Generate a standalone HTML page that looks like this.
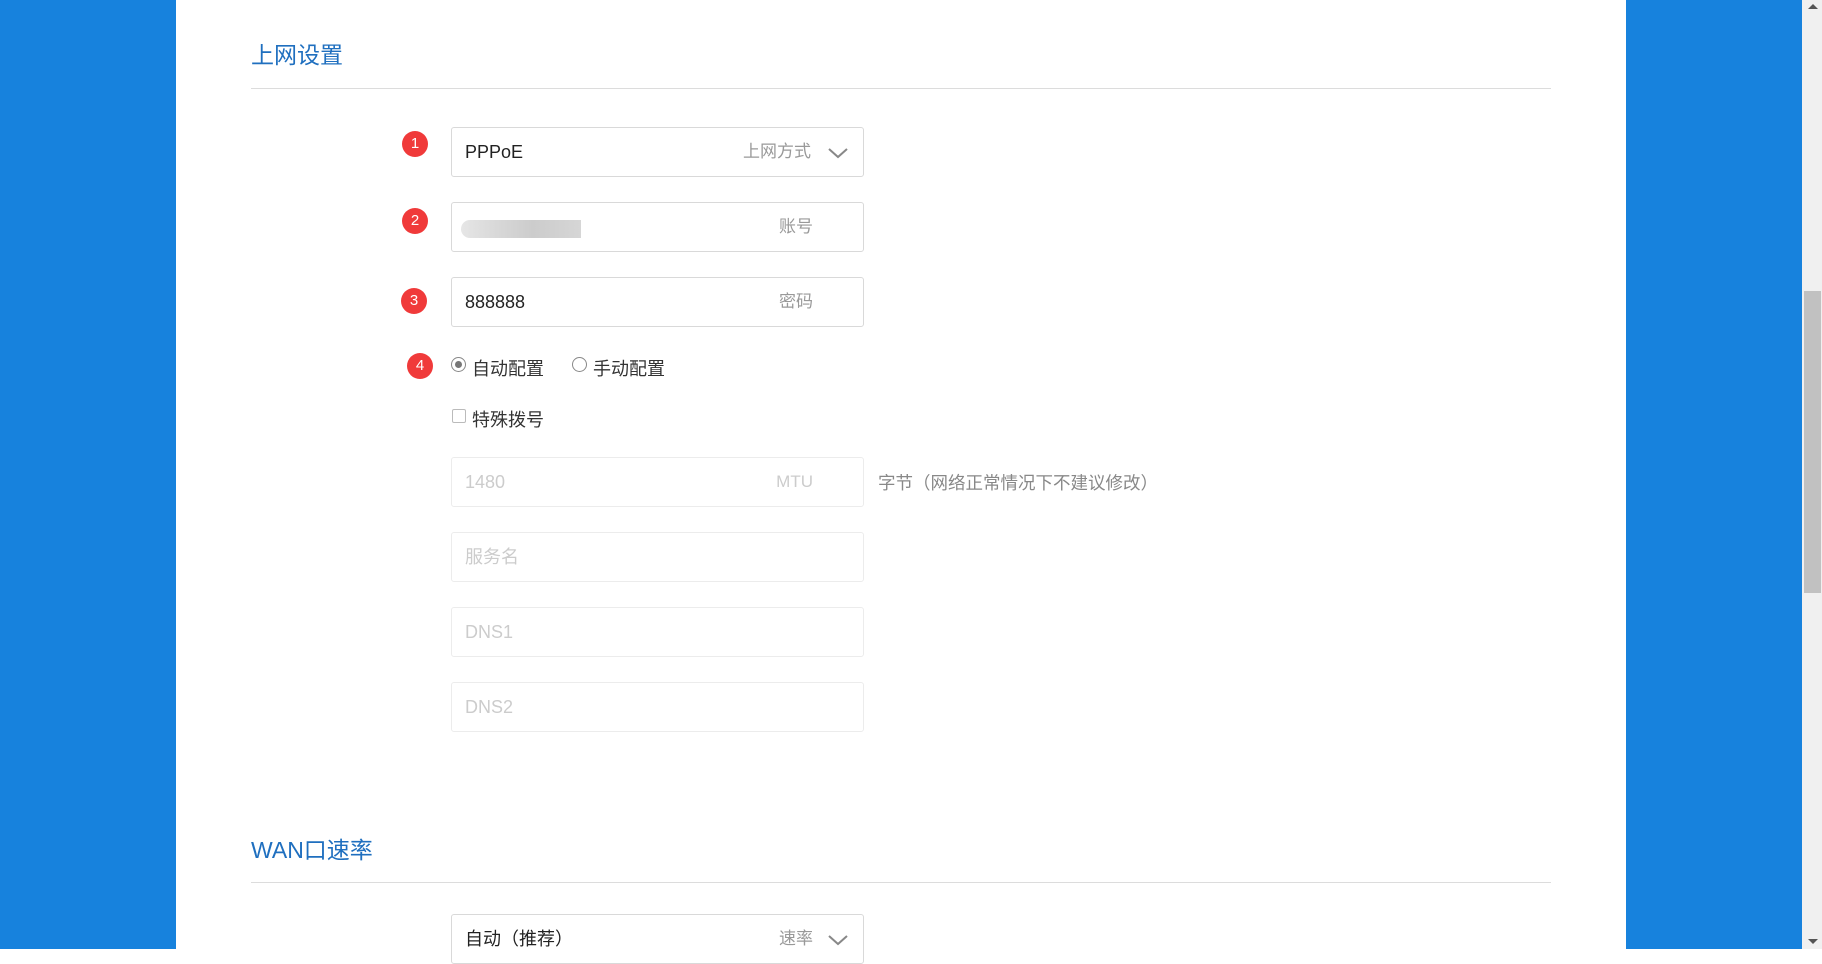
<!DOCTYPE html><html><head><meta charset="utf-8"><style>
*{box-sizing:border-box;margin:0;padding:0}
body{width:1822px;height:949px;overflow:hidden;background:#fff;font-family:"Liberation Sans","Noto Sans CJK SC",sans-serif;position:relative}
.a{position:absolute}
.blue{background:#1782dd;top:0;height:949px}
.title{color:#1f6fbf;font-size:23px;left:251px}
.line{left:251px;width:1300px;height:1px;background:#dcdcdc}
.badge{width:26px;height:26px;border-radius:50%;background:#f03a3a;color:#fff;font-size:15px;text-align:center;line-height:26px}
.inp{left:451px;width:413px;height:50px;border:1px solid #d9d9d9;border-radius:3px}
.inp .v{position:absolute;left:13px;top:0;line-height:48px;font-size:18px;color:#222}
.inp .l{position:absolute;right:50px;top:0;line-height:48px;font-size:17px;color:#999}
.dis{border-color:#ececec}
.dis .v,.dis .l{color:#ccc}
</style></head><body>
<div class="a blue" style="left:0;width:176px"></div>
<div class="a blue" style="left:1626px;width:176px"></div>
<div class="a" style="left:1802px;top:0;width:20px;height:949px;background:#f0f0f0"></div>
<div class="a" style="left:1804px;top:291px;width:17px;height:302px;background:#c1c1c1"></div>
<div class="a" style="left:1808px;top:4px;width:0;height:0;border:5px solid transparent;border-bottom-color:#555;border-top:0"></div>
<div class="a" style="left:1808px;top:939px;width:0;height:0;border:5px solid transparent;border-top-color:#555;border-bottom:0"></div>

<div class="a title" style="top:36px">上网设置</div>
<div class="a line" style="top:88px"></div>

<div class="a badge" style="left:402px;top:131px">1</div>
<div class="a inp" style="top:127px"><span class="v">PPPoE</span><span class="l" style="right:52px">上网方式</span>
<svg class="a" style="left:375px;top:18px" width="22" height="14"><path d="M2 3l9 8 9-8" stroke="#888" stroke-width="2" fill="none"/></svg></div>

<div class="a badge" style="left:402px;top:208px">2</div>
<div class="a inp" style="top:202px"><div class="a" style="left:9px;top:17px;width:120px;height:18px;border-radius:9px 0 0 9px;background:linear-gradient(90deg,#e6e6e6,#d8d8d8 30%,#ccc 60%,#d6d6d6)"></div><span class="l">账号</span></div>

<div class="a badge" style="left:401px;top:288px">3</div>
<div class="a inp" style="top:277px"><span class="v">888888</span><span class="l">密码</span></div>

<div class="a badge" style="left:407px;top:353px">4</div>
<div class="a" style="left:451px;top:357px;width:15px;height:15px;border:1px solid #888;border-radius:50%"><div style="margin:3px;width:7px;height:7px;border-radius:50%;background:#777"></div></div>
<div class="a" style="left:472px;top:355px;font-size:18px;color:#333">自动配置</div>
<div class="a" style="left:572px;top:357px;width:15px;height:15px;border:1px solid #888;border-radius:50%"></div>
<div class="a" style="left:593px;top:355px;font-size:18px;color:#333">手动配置</div>

<div class="a" style="left:452px;top:409px;width:14px;height:14px;border:1px solid #bbb;border-radius:2px"></div>
<div class="a" style="left:472px;top:406px;font-size:18px;color:#333">特殊拨号</div>

<div class="a inp dis" style="top:457px"><span class="v">1480</span><span class="l">MTU</span></div>
<div class="a" style="left:878px;top:470px;font-size:17.5px;color:#888">字节（网络正常情况下不建议修改）</div>
<div class="a inp dis" style="top:532px"><span class="v">服务名</span></div>
<div class="a inp dis" style="top:607px"><span class="v">DNS1</span></div>
<div class="a inp dis" style="top:682px"><span class="v">DNS2</span></div>

<div class="a title" style="top:831px">WAN口速率</div>
<div class="a line" style="top:882px"></div>
<div class="a inp" style="top:914px"><span class="v">自动（推荐）</span><span class="l">速率</span>
<svg class="a" style="left:375px;top:18px" width="22" height="14"><path d="M2 3l9 8 9-8" stroke="#888" stroke-width="2" fill="none"/></svg></div>
</body></html>
